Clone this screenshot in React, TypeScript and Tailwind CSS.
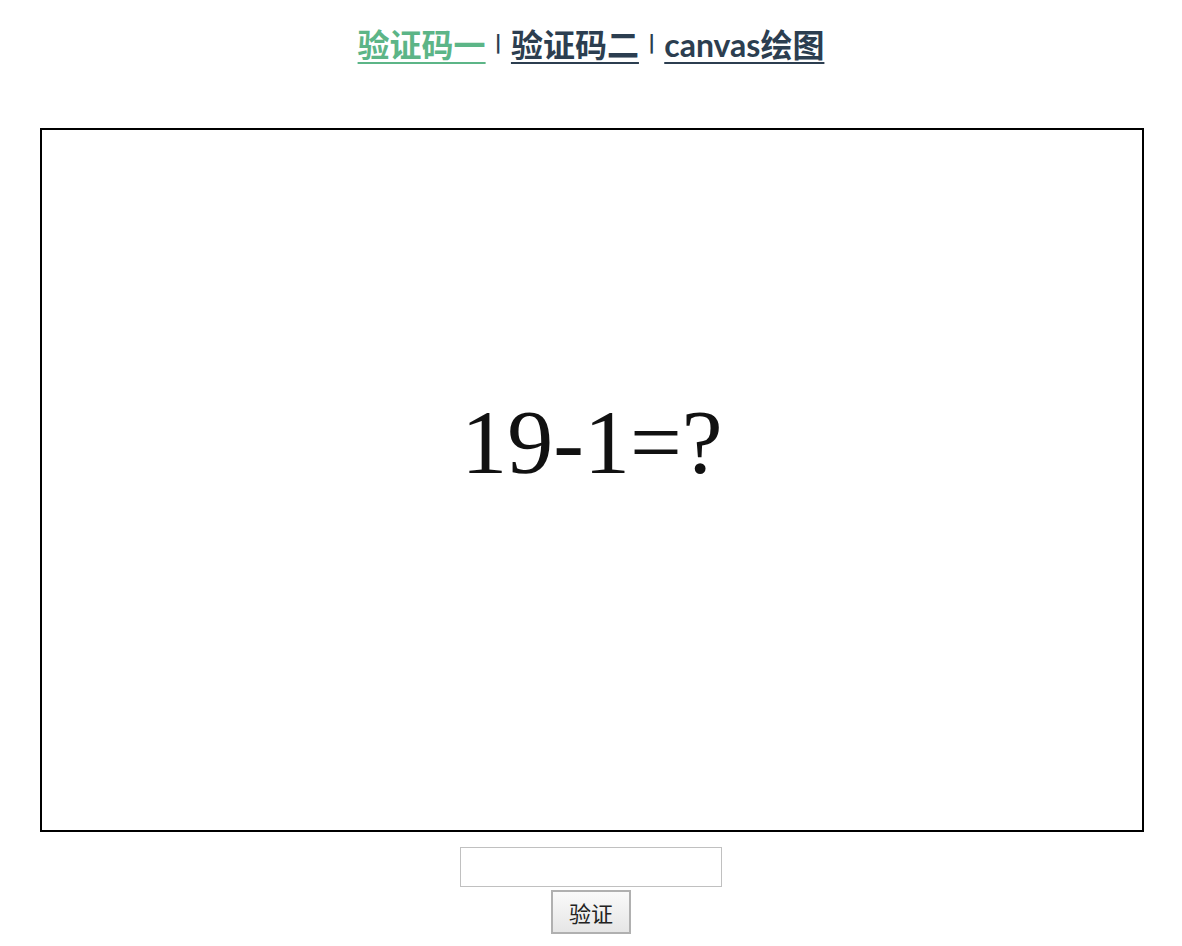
const App = () => {
  return (
    <div className="min-h-[946px] bg-white font-['Lato','Noto_Sans_CJK_SC',sans-serif]">
      <div className="pt-[22px] h-[128px] flex justify-center">
        <div className="flex items-center h-[46px] font-bold text-[#2c3e50]">
          <a className="text-[32px] text-[#5cb587] underline underline-offset-[5px] decoration-2">验证码一</a>
          <span className="mx-[9px] mb-[6px] text-[20px] font-bold text-[#2c3e50] font-['DejaVu_Sans',sans-serif]">|</span>
          <a className="text-[32px] underline underline-offset-[5px] decoration-2">验证码二</a>
          <span className="mx-[9px] mb-[6px] text-[20px] font-bold text-[#2c3e50] font-['DejaVu_Sans',sans-serif]">|</span>
          <a className="text-[32px] underline underline-offset-[5px] decoration-2">canvas绘图</a>
        </div>
      </div>
      <div className="ml-10 w-[1104px] h-[704px] border-2 border-black flex justify-center pt-[266px]">
        <span className="font-['Liberation_Serif',serif] text-[92px] leading-none text-[#111]">19-1=?</span>
      </div>
      <div className="flex flex-col items-center pt-[15px]">
        <input className="w-[262px] h-[40px] border border-[#c0c0c0] outline-none" type="text" />
        <button className="mt-[3px] w-[80px] h-[44px] border-2 border-[#b0b0b0] bg-gradient-to-b from-[#fafafa] to-[#e6e6e6] text-[22px] text-[#222] font-['Noto_Sans_CJK_SC',sans-serif]">
          验证
        </button>
      </div>
    </div>
  )
}

export default App
